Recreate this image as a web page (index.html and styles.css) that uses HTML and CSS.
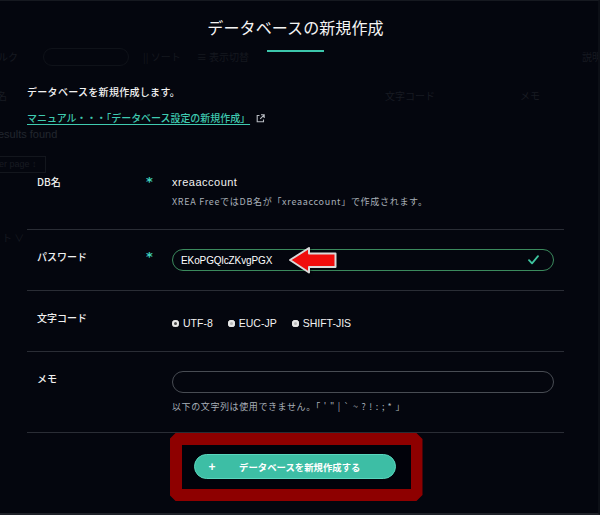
FILE: index.html
```html
<!DOCTYPE html>
<html lang="ja">
<head>
<meta charset="utf-8">
<title>データベースの新規作成</title>
<link rel="stylesheet" href="styles.css">
</head>
<body>
<div class="screen">
  <div class="ghost">
    <div class="g-toolbar">
      <span class="g-cut">ルク</span>
      <span class="g-search"></span>
      <span class="g-tool">|| ソート</span>
      <span class="g-tool">≡ 表示切替</span>
      <span class="g-right">説明</span>
    </div>
    <div class="g-head">
      <span class="g-c1">名</span>
      <span class="g-c2">パスワード</span>
      <span class="g-c3">文字コード</span>
      <span class="g-c4">メモ</span>
    </div>
    <div class="g-results">esults found</div>
    <div class="g-perpage">er page ↕</div>
    <div class="g-sort">ト ∨</div>
  </div>

  <div class="modal">
    <h1 class="title">データベースの新規作成</h1>
    <div class="title-bar"></div>
    <p class="intro">データベースを新規作成します。</p>
    <p class="manual"><a class="manual-link" href="#">マニュアル・・・「データベース設定の新規作成」</a><svg class="ext" width="9" height="9" viewBox="0 0 9 9"><path d="M3.5 1.5H1.2v6.3h6.3V5.5" fill="none" stroke="#b8bcc2" stroke-width="1.1"/><path d="M5 .8h3.2V4M8.2.8 4.2 4.8" fill="none" stroke="#b8bcc2" stroke-width="1.1"/></svg></p>

    <div class="form">
      <div class="row">
        <div class="label">DB名</div>
        <div class="req">*</div>
        <div class="field">
          <div class="value">xreaaccount</div>
          <div class="help">XREA FreeではDB名が「xreaaccount」で作成されます。</div>
        </div>
      </div>
      <div class="row">
        <div class="label">パスワード</div>
        <div class="req">*</div>
        <div class="field">
          <div class="input input-ok">
            <span class="input-text">EKoPGQlcZKvgPGX</span>
            <svg class="check" width="11" height="10" viewBox="0 0 11 10"><path d="M1 5.2 4 8.3 10 1.2" fill="none" stroke="#3ec49f" stroke-width="1.8" stroke-linecap="round" stroke-linejoin="round"/></svg>
            <svg class="arrow" width="50" height="29" viewBox="0 0 50 29"><path d="M2 14 21 2V7.5H47.5V21H21V26.5Z" fill="#f00c0c" stroke="#d9d9d9" stroke-width="2" stroke-linejoin="round"/></svg>
          </div>
        </div>
      </div>
      <div class="row">
        <div class="label">文字コード</div>
        <div class="req"></div>
        <div class="field">
          <div class="radios">
            <span class="radio"><span class="dot dot-on"></span>UTF-8</span>
            <span class="radio"><span class="dot"></span>EUC-JP</span>
            <span class="radio"><span class="dot"></span>SHIFT-JIS</span>
          </div>
        </div>
      </div>
      <div class="row row-last">
        <div class="label">メモ</div>
        <div class="req"></div>
        <div class="field">
          <div class="input input-empty"></div>
          <div class="help help-memo">以下の文字列は使用できません。<span class="symbols">「'"|`~?!:;*」</span></div>
        </div>
      </div>
    </div>

    <div class="submit-wrap">
      <div class="highlight">
        <button class="submit" type="button"><span class="plus">+</span><span class="submit-text">データベースを新規作成する</span></button>
      </div>
    </div>
  </div>
</div>
</body>
</html>
```

FILE: styles.css
```css
* { box-sizing: border-box; }

html, body {
  margin: 0;
  padding: 0;
  background: #04060e;
}

body {
  font-family: "Noto Sans CJK JP", "Noto Sans", sans-serif;
  color: #f2f2f2;
}

.screen {
  position: relative;
  width: 600px;
  height: 515px;
  overflow: hidden;
  background: #04060e;
  border-top: 1px solid #161920;
  border-bottom: 2px solid #1e2128;
  border-right: 2px solid #0c0f16;
}

/* faint page behind the modal */
.ghost {
  color: #171a21;
  font-size: 10px;
  line-height: 14px;
}

.g-toolbar {
  display: flex;
  align-items: center;
  height: 18px;
  margin-top: 47px;
}

.g-cut { width: 45px; margin-left: -2px; }

.g-search {
  width: 86px;
  height: 18px;
  border: 1px solid #0f1219;
  border-radius: 9px;
  margin-right: 14px;
}

.g-tool { margin-right: 16px; color: #15181f; }

.g-right { margin-left: auto; margin-right: -4px; }

.g-head {
  display: flex;
  margin-top: 23px;
  height: 16px;
  color: #181b22;
}

.g-c1 { width: 120px; margin-left: -3px; }
.g-c2 { width: 268px; }
.g-c3 { width: 135px; }

.g-results {
  margin-top: 22px;
  margin-left: -2px;
  font-family: "Liberation Sans", sans-serif;
  font-size: 11px;
  color: #22262e;
}

.g-perpage {
  width: 50px;
  margin-top: 15px;
  margin-left: -4px;
  height: 17px;
  border: 1px solid #13161d;
  font-family: "Liberation Sans", sans-serif;
  font-size: 9px;
  line-height: 15px;
  padding-left: 2px;
  color: #181b22;
}

.g-sort {
  margin-top: 58px;
  margin-left: 2px;
  color: #161920;
}

/* modal */
.modal {
  position: absolute;
  inset: 0;
  padding: 14px 34px 0 27px;
}

.title {
  margin: 0;
  text-align: center;
  font-size: 16px;
  line-height: 24px;
  font-weight: 400;
  color: #f4f4f4;
  letter-spacing: 0.1px;
}

.title-bar {
  width: 57px;
  height: 2px;
  margin: 11px auto 0;
  background: #3cc6ab;
}

.intro {
  margin: 32px 0 0;
  font-size: 10px;
  line-height: 16px;
  font-weight: 500;
  color: #f2f2f2;
  letter-spacing: 0.3px;
}

.manual {
  margin: 10px 0 0;
  font-size: 10px;
  line-height: 16px;
  display: flex;
  align-items: center;
}

.manual-link {
  color: #3fcab0;
  font-weight: 500;
  letter-spacing: -0.05px;
  text-decoration: underline;
  text-underline-offset: 2px;
  text-decoration-thickness: 1px;
}

.ext { margin-left: 6px; }

.form { margin-top: 29px; }

.row {
  display: grid;
  grid-template-columns: 109px 26px 1fr;
  padding: 19px 10px 19px 10px;
  border-bottom: 1px solid #2a2d35;
}

.row-last { padding-bottom: 17px; }

.label {
  font-size: 10px;
  line-height: 16px;
  font-weight: 500;
  color: #f0f0f0;
}

.req {
  font-size: 13px;
  line-height: 16px;
  font-weight: 700;
  color: #40d2bd;
  font-family: "DejaVu Sans", sans-serif;
}

.value {
  font-family: "Liberation Sans", sans-serif;
  font-size: 11px;
  line-height: 16px;
  letter-spacing: 0.5px;
  color: #f2f2f2;
}

.help {
  margin-top: 4px;
  font-size: 9px;
  line-height: 16px;
  color: #a8b0b8;
  letter-spacing: 0.7px;
}

.help-memo { margin-top: 6px; letter-spacing: 0.6px; }

.symbols { letter-spacing: 3.6px; }

.input {
  position: relative;
  display: flex;
  align-items: center;
  height: 22px;
  border-radius: 11px;
  padding: 0 14px 0 8px;
}

.input-ok { border: 1.5px solid #3b8a5d; }

.input-empty { border: 1.5px solid #484c53; }

.input-text {
  font-family: "Liberation Sans", sans-serif;
  font-size: 10px;
  color: #ffffff;
  letter-spacing: -0.1px;
}

.check { margin-left: auto; }

.arrow {
  position: absolute;
  left: 115px;
  top: -4px;
  filter: drop-shadow(1px 1px 1px rgba(0,0,0,0.5));
}

.radios {
  display: flex;
  gap: 15px;
  margin-top: 5px;
  font-family: "Liberation Sans", sans-serif;
  font-size: 10.5px;
  line-height: 17px;
  color: #f2f2f2;
}

.radio {
  display: flex;
  align-items: center;
}

.dot {
  width: 7px;
  height: 7px;
  border-radius: 50%;
  margin-right: 4px;
  background: #e6e6e6;
  box-shadow: inset 0 0 0 2px #e6e6e6, inset 0 0 0 4px #b9b9b9;
}

.dot-on {
  box-shadow: inset 0 0 0 2px #e6e6e6, inset 0 0 0 4px #4a4a4a;
}

.submit-wrap {
  display: flex;
  justify-content: center;
}

.highlight {
  width: 253px;
  border: 12px solid #8e0000;
  background: #01020a;
  padding: 9px 0 10px;
  display: flex;
  justify-content: center;
  margin-left: 1px;
  clip-path: polygon(6px 0, calc(100% - 6px) 0, 100% 6px, 100% calc(100% - 6px), calc(100% - 6px) 100%, 6px 100%, 0 calc(100% - 6px), 0 6px);
}

.submit {
  display: flex;
  align-items: center;
  width: 202px;
  height: 25px;
  margin-left: -2px;
  padding: 0 0 0 13px;
  border: 1px solid #5ad6bd;
  border-radius: 13px;
  background: #3dbea5;
  color: #ffffff;
  font-family: "Noto Sans CJK JP", sans-serif;
  cursor: pointer;
}

.plus {
  font-family: "Liberation Sans", sans-serif;
  font-size: 12px;
  font-weight: 700;
  width: 8px;
  line-height: 12px;
}

.submit-text {
  margin-left: 23px;
  font-size: 9.4px;
  font-weight: 700;
  letter-spacing: 0;
}
```
